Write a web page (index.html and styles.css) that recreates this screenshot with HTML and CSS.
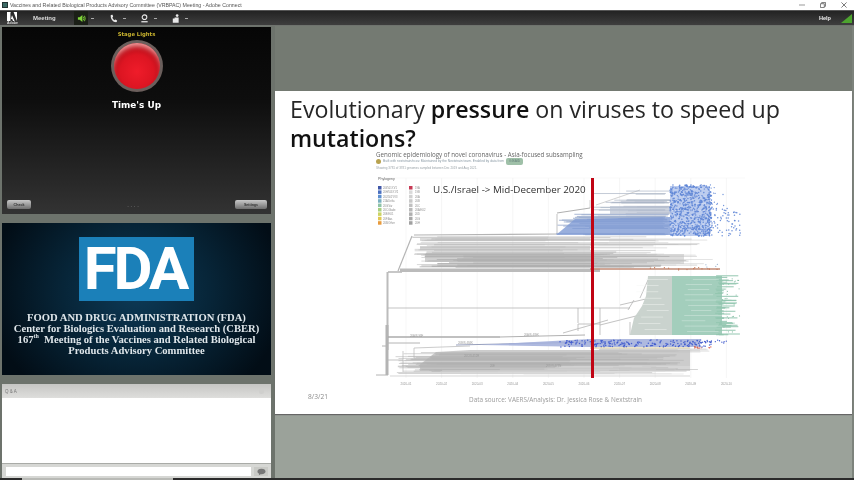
FILE: index.html
```html
<!DOCTYPE html>
<html lang="en">
<head>
<meta charset="utf-8">
<title>Adobe Connect</title>
<link rel="stylesheet" href="styles.css">
</head>
<body>
<div class="app">
  <header class="titlebar">
    <span class="app-icon"></span>
    <span class="title-text">Vaccines and Related Biological Products Advisory Committee (VRBPAC) Meeting - Adobe Connect</span>
    <span class="win-controls">
      <svg class="win-icon" viewBox="0 0 7 7"><path d="M0 3.5H7" stroke="#888" stroke-width="1"/></svg>
      <svg class="win-icon" viewBox="0 0 7 7"><path d="M.5 2H5V6.5H.5ZM2 2V.5H6.5V5H5" fill="none" stroke="#666" stroke-width="1"/></svg>
      <svg class="win-icon" viewBox="0 0 7 7"><path d="M.5.5L6.5 6.5M6.5.5L.5 6.5" stroke="#666" stroke-width="1"/></svg>
    </span>
  </header>
  <nav class="toolbar">
    <div class="adobe">
      <svg class="adobe-mark" viewBox="0 0 10 9"><path d="M0 0H3.4V9H0ZM6.6 0H10V9ZM5 3.2L7.6 9H6L5.2 7H3.9Z" fill="#fff"/><path d="M0 0H3.6L0 9Z" fill="#fff"/></svg>
      <span class="adobe-word">Adobe</span>
    </div>
    <span class="menu-item">Meeting</span>
    <div class="tool tool-on">
      <svg class="tool-icon" viewBox="0 0 10 10"><path d="M1 3.5H3L6 1V9L3 6.5H1Z" fill="#7fd43a"/><path d="M7 3Q8.5 5 7 7M8.3 2Q10 5 8.3 8" fill="none" stroke="#7fd43a"/></svg>
    </div>
    <span class="caret caret-first"></span>
    <div class="tool">
      <svg class="tool-icon" viewBox="0 0 10 10"><path d="M2 1L4 .8L4.6 3.2L3.6 4C4 5.4 4.8 6.4 6 7L7 6L9 7.2L8.6 9C5 9.6 1.2 5.4 2 1Z" fill="#e8e8e8"/></svg>
    </div>
    <span class="caret"></span>
    <div class="tool">
      <svg class="tool-icon" viewBox="0 0 10 10"><circle cx="5" cy="3.6" r="2.6" fill="none" stroke="#e8e8e8" stroke-width="1.2"/><path d="M1.5 8.6H8.5" stroke="#e8e8e8" stroke-width="1.4"/></svg>
    </div>
    <span class="caret"></span>
    <div class="tool">
      <svg class="tool-icon" viewBox="0 0 10 10"><circle cx="6.8" cy="1.8" r="1.5" fill="#e8e8e8"/><path d="M2 5H4V4H8.5V9.6H2Z" fill="#e8e8e8"/></svg>
    </div>
    <span class="caret"></span>
    <span class="toolbar-space"></span>
    <span class="help">Help</span>
    <svg class="signal" viewBox="0 0 11 9"><path d="M0 9L11 0V9Z" fill="#4da32f"/></svg>
  </nav>
  <main class="workspace">
    <aside class="sidebar">
      <section class="stage">
        <h2 class="stage-title">Stage Lights</h2>
        <div class="light"><div class="light-core"></div></div>
        <p class="stage-status">Time's Up</p>
        <div class="stage-foot">
          <button class="stage-btn stage-check">Check</button>
          <span class="stage-dots">. . . .</span>
          <button class="stage-btn stage-settings">Settings</button>
        </div>
      </section>
      <section class="fda">
        <div class="fda-logo"><span class="fda-letters">FDA</span></div>
        <p class="fda-text">FOOD AND DRUG ADMINISTRATION (FDA)<br>Center for Biologics Evaluation and Research (CBER)<br>167<sup>th</sup>&nbsp; Meeting of the Vaccines and Related Biological<br>Products Advisory Committee</p>
      </section>
      <section class="qa">
        <div class="qa-head"><span>Q &amp; A</span><span class="qa-menu"></span></div>
        <div class="qa-body"></div>
        <div class="qa-foot">
          <span class="qa-input"></span>
          <span class="qa-send">
            <svg viewBox="0 0 10 8" class="qa-bubble"><path d="M5 .5C8 .5 9.5 2 9.5 3.5S8 6.5 5 6.5H4L2 7.6L2.4 6C1 5.5.5 4.5.5 3.5C.5 2 2 .5 5 .5Z" fill="#777"/></svg>
          </span>
        </div>
      </section>
    </aside>
    <section class="content">
      <div class="content-top"></div>
      <article class="slide">
        <h1 class="slide-title">Evolutionary <b>pressure</b> on viruses to speed up<br><b>mutations?</b></h1>
        <div class="figure">
          <h3 class="fig-title">Genomic epidemiology of novel coronavirus - Asia-focused subsampling</h3>
          <p class="fig-meta"><span class="fig-dot"></span>Built with nextstrain/ncov. Maintained by the Nextstrain team. Enabled by data from <span class="fig-pill">GISAID</span></p>
          <p class="fig-note">Showing 3781 of 3781 genomes sampled between Dec 2019 and Aug 2021.</p>
          <div class="chart">
            <svg id="tree" class="tree" viewBox="375 172 375 216" aria-label="Phylogeny tree"></svg>
            <span class="callout">U.S./Israel -&gt; Mid-December 2020</span>
          </div>
        </div>
        <footer class="slide-foot">
          <span class="slide-date">8/3/21</span>
          <span class="slide-source">Data source: VAERS/Analysis: Dr. Jessica Rose &amp; Nextstrain</span>
        </footer>
      </article>
    </section>
  </main>
  <footer class="taskstrip"><span class="taskstrip-tab"></span></footer>
</div>
<script src="app.js"></script>
</body>
</html>
```
FILE: styles.css
```css
* { box-sizing: border-box; }
html, body { margin: 0; height: 100%; overflow: hidden; }
body { font-family: "Liberation Sans", Arial, sans-serif; background: #6f756e; }
.app { width: 854px; height: 480px; display: flex; flex-direction: column; filter: blur(0.6px); }

.titlebar { height: 10px; background: #fff; display: flex; align-items: center; padding-left: 2px; }
.app-icon { width: 6px; height: 6px; background: #3c6a66; border: 1px solid #233; }
.title-text { margin-left: 2px; font-size: 5.25px; color: #555; white-space: nowrap; }
.win-controls { margin-left: auto; display: flex; gap: 15px; padding-right: 7px; }
.win-icon { width: 6px; height: 6px; display: block; }

.toolbar { height: 16px; display: flex; align-items: center; background: linear-gradient(#232323, #3e3e3e); border-top: 1px solid #555; border-bottom: 1px solid #6f736e; color: #eee; }
.adobe { width: 33px; padding-left: 7px; display: flex; flex-direction: column; align-items: flex-start; }
.adobe-mark { width: 10px; height: 9px; }
.adobe-word { font-size: 3.5px; font-weight: bold; color: #ddd; line-height: 4px; }
.menu-item { width: 41px; font-size: 6px; font-weight: bold; color: #ddd; }
.tool { width: 14px; height: 14px; display: flex; align-items: center; justify-content: center; }
.tool-on { background: #1b1f17; }
.tool-icon { width: 9px; height: 9px; }
.caret { width: 3px; height: 1px; background: #aaa; margin: 0 11px 0 3px; }
.caret-first { margin-right: 12px; }
.toolbar-space { flex: 1; }
.help { font-size: 5.6px; font-weight: bold; color: #eee; margin-right: 10px; }
.signal { width: 11px; height: 9px; margin-right: 2px; }

.workspace { flex: 1; display: flex; min-height: 0; }
.sidebar { width: 272px; padding: 1px 1px 0 2px; display: flex; flex-direction: column; background: #6d736c; }

.stage { height: 187px; background: linear-gradient(#060606, #0e0e0e 40%, #333 100%); display: flex; flex-direction: column; align-items: center; color: #fff; }
.stage-title { margin: 4px 0 0; font: bold 5.3px/7px "DejaVu Sans", sans-serif; color: #c8b22e; }
.light { width: 52px; height: 52px; margin-top: 2px; border-radius: 50%; background: #6b5f5c; padding: 3px; }
.light-core { width: 100%; height: 100%; border-radius: 50%; background: radial-gradient(circle at 50% 62%, #ef1c2a 0, #dd1522 45%, #a80f18 78%, #8d1218 100%); box-shadow: inset 0 5px 5px -2px #f4a2a2; }
.stage-status { margin: 7px 0 0; font: bold 8.9px/12px "DejaVu Sans", sans-serif; }
.stage-foot { margin-top: auto; width: 100%; padding: 0 4px 5px 5px; display: flex; justify-content: space-between; align-items: center; }
.stage-btn { height: 9px; padding: 0; border: 0; border-radius: 2px; background: linear-gradient(#c9c9c9, #6f6f6f); font: bold 3.6px "Liberation Sans", sans-serif; color: #333; }
.stage-check { width: 24px; }
.stage-settings { width: 32px; }
.stage-dots { font-size: 6px; color: #666; font-weight: bold; }

.fda { margin-top: 9px; height: 152px; padding-top: 14px; background: radial-gradient(ellipse 55% 85% at 50% 45%, #0d3a57 0, #072538 50%, #020d16 100%); display: flex; flex-direction: column; align-items: center; }
.fda-logo { width: 115px; height: 64px; background: #1b80b9; display: flex; align-items: center; justify-content: center; }
.fda-letters { font: bold 60px/64px Roboto, sans-serif; letter-spacing: -3px; color: #fff; margin-left: -3px; }
.fda-text { margin: 11px 0 0; text-align: center; font: bold 10.6px/11px "Liberation Serif", serif; color: #dfe6ea; white-space: nowrap; }
.fda-text sup { font-size: 6px; line-height: 0; }

.qa { margin-top: 9px; flex: 1; display: flex; flex-direction: column; }
.qa-head { height: 14px; padding: 0 7px 0 3px; display: flex; align-items: center; justify-content: space-between; font-size: 4.5px; color: #777; background: linear-gradient(#c6c6c4, #dededc); }
.qa-menu { width: 5px; height: 5px; border-radius: 50%; background: #cfcfcd; }
.qa-body { flex: 1; background: #fff; }
.qa-foot { height: 15px; padding: 3px 3px 2px 4px; display: flex; gap: 3px; background: #d6d7d4; border-top: 1px solid #a9aba7; }
.qa-input { flex: 1; background: #fff; }
.qa-send { width: 14px; display: flex; align-items: center; justify-content: center; background: #c9cac6; }
.qa-bubble { width: 9px; height: 8px; }

.taskstrip { height: 2px; background: #2b2b2b; padding-left: 22px; }
.taskstrip-tab { display: block; width: 151px; height: 2px; background: #b9bab6; }

.content { flex: 1; display: flex; flex-direction: column; background: #9ba29a; border-left: 3px solid #6d736c; border-right: 2px solid #7d837c; }
.content-top { height: 65px; background: #747a72; }
.slide { height: 323px; background: #fff; position: relative; display: flex; flex-direction: column; box-shadow: 0 1px 1px #666; }
.slide-title { margin: 4px 0 0 15px; font: 400 23.2px/28.5px "Open Sans", sans-serif; color: #262626; white-space: nowrap; }
.slide-title b { font-weight: 600; color: #111; }
.figure { margin: 0 0 0 101px; }
.fig-title { margin: 0; font: 400 6.2px/6px "Open Sans", sans-serif; color: #666; white-space: nowrap; }
.fig-meta { margin: 0; font-size: 3.3px; line-height: 7px; color: #8a9aa5; display: flex; align-items: center; white-space: nowrap; }
.fig-dot { width: 5px; height: 5px; margin-right: 2px; border-radius: 50%; background: #b8a24f; }
.fig-pill { margin-left: 2px; padding: 0 3px; border-radius: 2px; background: #9fc0a8; color: #66807a; }
.fig-note { margin: 0; font-size: 3px; line-height: 7px; color: #9aa3a8; white-space: nowrap; }
.chart { position: relative; width: 375px; height: 216px; margin-left: -1px; }
.tree { display: block; width: 375px; height: 216px; }
.callout { position: absolute; left: 58px; top: 11px; font: 400 9.8px/14px "Open Sans", sans-serif; color: #303030; white-space: nowrap; }
.slide-foot { position: absolute; left: 0; right: 0; top: 301px; height: 12px; }
.slide-date { position: absolute; left: 33px; top: 0; font: 400 6.6px/10px "Open Sans", sans-serif; color: #8a8a8a; }
.slide-source { position: absolute; left: 194px; top: 3px; font: 400 6.4px/10px "Open Sans", sans-serif; color: #9a9a9a; white-space: nowrap; }
```
FILE: app.js
```js
// Draws the Nextstrain-style phylogeny into #tree with a seeded generator.
(function () {
  var NS = "http://www.w3.org/2000/svg";
  var svg = document.getElementById("tree");
  var seed = 12345;
  function rnd() { seed = (seed * 16807) % 2147483647; return seed / 2147483647; }
  function r(a, b) { return a + (b - a) * rnd(); }
  function el(name, attrs, text) {
    var n = document.createElementNS(NS, name);
    for (var k in attrs) n.setAttribute(k, attrs[k]);
    if (text) n.textContent = text;
    svg.appendChild(n);
    return n;
  }
  function line(x1, y1, x2, y2, color, w, op) {
    el("line", { x1: x1, y1: y1, x2: x2, y2: y2, stroke: color, "stroke-width": w, opacity: op === undefined ? 1 : op });
  }
  function rect(x, y, w, h, color, op) {
    el("rect", { x: x, y: y, width: w, height: h, fill: color, opacity: op === undefined ? 1 : op });
  }
  function bundle(x0a, x0b, x1a, x1b, y0, y1, n, color, w, op) {
    for (var i = 0; i < n; i++) {
      var y = r(y0, y1);
      line(r(x0a, x0b), y, r(x1a, x1b), y, color, w, op);
    }
  }
  function dots(xa, xb, ya, yb, n, color, rad, op) {
    for (var i = 0; i < n; i++) {
      el("circle", { cx: r(xa, xb), cy: r(ya, yb), r: rad, fill: color, opacity: op === undefined ? 1 : op });
    }
  }
  function label(x, y, t) {
    el("text", { x: x, y: y, "font-size": 2.8, fill: "#999", "font-family": "Liberation Sans" }, t);
  }
  var GREY = "#b4b4b4", BLUE = "#5f86d6", GREEN = "#93c6b0";

  // grid and axis
  for (var g = 406; g < 735; g += 35.6) {
    line(g, 178, g, 378, "#ececec", 0.5);
    el("text", { x: g, y: 385, "text-anchor": "middle", "font-size": 3, fill: "#999", "font-family": "Liberation Sans" }, "2020-" + String(((g - 406) / 35.6 | 0) + 1).padStart(2, "0"));
  }
  line(378, 178, 745, 178, "#f0f0f0", 0.5);

  // root trunks
  rect(386.5, 272, 2, 78, "#bcbcbc");
  rect(385.5, 325, 3, 50, "#b4b4b4");
  line(376, 375, 388, 375, GREY, 1);
  line(382, 346, 388, 346, GREY, 1);

  // upper grey clade
  line(388, 272, 402, 272, GREY, 1.5);
  line(398, 271, 412, 236, GREY, 1.2);
  line(414, 235, 560, 234, GREY, 1.2);
  rect(400, 268.5, 200, 3.5, "#bbbbbb");
  rect(420, 238, 170, 3, "#d2d2d2", 0.8);
  rect(420, 246, 170, 4, "#cacaca", 0.8);
  rect(425, 254, 175, 8, "#cbcbcb", 0.9);
  rect(594, 254, 90, 10, "#d4d4d4", 0.8);
  bundle(412, 440, 540, 700, 236, 268, 44, "#bdbdbd", 0.6);
  bundle(418, 480, 590, 670, 252, 268, 26, "#b0b0b0", 0.8);
  bundle(590, 610, 640, 715, 240, 268, 16, "#c6c6c6", 0.5);
  line(590, 269, 720, 269, "#c08a74", 1.3);
  dots(650, 720, 267.5, 270.5, 14, "#c0714f", 0.6);
  dots(705, 728, 264, 268, 4, "#8aa6c8", 0.6);

  // blue clade
  line(557, 214, 557, 234, GREY, 0.8);
  line(557, 213, 590, 208, "#a6a6a6", 0.9);
  line(590, 208, 590, 200, GREY, 0.6);
  line(596, 205, 640, 190, GREY, 0.6);
  bundle(590, 640, 664, 672, 190, 220, 26, "#abb4c6", 0.7);
  bundle(555, 590, 660, 672, 214, 235, 22, "#9fb0d0", 0.9);
  el("polygon", { points: "556,235 575,219 670,217 670,235", fill: "#7f9bd4", opacity: 0.8 });
  rect(610, 206, 60, 8, "#b8c1d2", 0.7);
  rect(670, 186, 40, 50, "#7c9ce0", 0.5);
  dots(670, 712, 185, 236, 640, BLUE, 0.8, 0.9);
  dots(700, 741, 208, 236, 80, BLUE, 0.75, 0.9);
  dots(704, 724, 184, 206, 20, BLUE, 0.65, 0.9);
  for (var b = 0; b < 7; b++) rect(672, 188 + b * 7 + r(0, 2), 36, 0.5, "#fff", 0.45);

  // green clade
  line(388, 308, 630, 308, GREY, 0.8);
  line(388, 337, 500, 337, "#ababab", 1.4);
  line(500, 337, 585, 335, "#b0b0b0", 1);
  line(563, 333, 591, 325, GREY, 0.8);
  line(578, 331, 578, 324, GREY, 0.8);
  line(591, 325, 608, 320, GREY, 0.8);
  line(578, 324, 600, 324, GREY, 0.8);
  line(578, 308, 578, 323, GREY, 0.8);
  line(600, 308, 600, 335, GREY, 0.8);
  line(620, 305, 650, 298, GREY, 0.8);
  line(628, 310, 634, 300, GREY, 0.8);
  line(640, 298, 648, 280, GREY, 0.8);
  line(600, 325, 640, 315, GREY, 0.8);
  line(630, 335, 630, 322, GREY, 0.8);
  el("polygon", { points: "648,276 672,276 672,335 630,335 634,318 642,306 646,296", fill: "#c7d1cb", opacity: 0.95 });
  for (var t = 0; t < 9; t++) rect(r(636, 650), 279 + t * 6.3, 22, 0.5, "#f4f6f5", 0.9);
  rect(672, 276, 50, 59, GREEN, 0.85);
  bundle(715, 720, 722, 741, 275, 335, 46, GREEN, 1);
  for (var s = 0; s < 11; s++) rect(r(678, 695), 279 + s * 5.2, r(18, 40), 0.5, "#eaf4ef", 0.7);
  dots(722, 740, 276, 335, 26, "#8cc2aa", 0.6);

  // blue band
  line(388, 343, 420, 343, GREY, 1);
  line(456, 345, 590, 342, "#98a0bc", 1.1);
  el("polygon", { points: "480,345 590,339 700,339 700,347 590,347", fill: "#a5b1dc", opacity: 0.9 });
  dots(560, 712, 340, 347, 190, "#3d58cc", 0.75, 0.9);
  dots(700, 728, 340, 344, 14, "#3d58cc", 0.65);
  line(590, 348, 690, 348, "#cbb978", 0.8);
  dots(680, 712, 346.5, 348.5, 12, "#d24d38", 0.6);

  // lower grey clade
  line(388, 360, 403, 360, GREY, 0.8);
  line(403, 351, 403, 372, GREY, 0.7);
  line(414, 348, 414, 358, GREY, 0.7);
  line(414, 348, 470, 346, GREY, 0.7);
  line(414, 358, 470, 358, GREY, 0.7);
  line(390, 376, 690, 376, "#c4c4c4", 0.7);
  el("polygon", { points: "418,366 436,352 470,350 690,350 690,366", fill: "#c6c6c6", opacity: 0.9 });
  rect(420, 366, 270, 5, "#d0d0d0", 0.9);
  bundle(395, 440, 560, 700, 351, 374, 50, "#b2b2b2", 0.55);
  bundle(590, 600, 670, 712, 349, 352, 10, "#c2c2c2", 0.5);
  bundle(440, 560, 600, 690, 366, 375, 16, "#d8d8d8", 0.5);
  label(410, 337, "20A/S.98F");
  label(524, 335.5, "20A/S.439K");
  label(458, 344, "20B/S.484K");
  label(464, 357, "20C/S.452R");
  label(490, 367, "20E");
  label(546, 367, "20D/S.477N");

  // red marker
  rect(591, 178, 3, 200, "#c00414");

  // legend
  el("text", { x: 378, y: 180, "font-size": 3.6, fill: "#666", "font-family": "Liberation Sans" }, "Phylogeny");
  var left = [["20I/501Y.V1", "#3f56a8"], ["20H/501Y.V2", "#4a6fc0"], ["20J/501Y.V3", "#5c8fd0"], ["21A.Delta", "#79b0c0"], ["20G.Var", "#8ec4a8"], ["20C.Glade", "#a8cf80"], ["20E.EU1", "#cbd463"], ["20F.Aus", "#e2c851"], ["20B.Other", "#e89a3c"]];
  var right = [["19A", "#c73a55"], ["19B", "#d9d9d9"], ["20A", "#d0d0d0"], ["20B", "#c8c8c8"], ["20C", "#c0c0c0"], ["20A.EU2", "#b8b8b8"], ["20D", "#b0b0b0"], ["20G", "#a8a8a8"], ["20H", "#a0a0a0"]];
  for (var i = 0; i < 9; i++) {
    var y = 186 + i * 4.4;
    rect(378, y, 3.5, 3.5, left[i][1]);
    el("text", { x: 383, y: y + 3, "font-size": 2.6, fill: "#888", "font-family": "Liberation Sans" }, left[i][0]);
    rect(409, y, 3.5, 3.5, right[i][1]);
    el("text", { x: 415, y: y + 3, "font-size": 2.6, fill: "#888", "font-family": "Liberation Sans" }, right[i][0]);
  }
})();
```
